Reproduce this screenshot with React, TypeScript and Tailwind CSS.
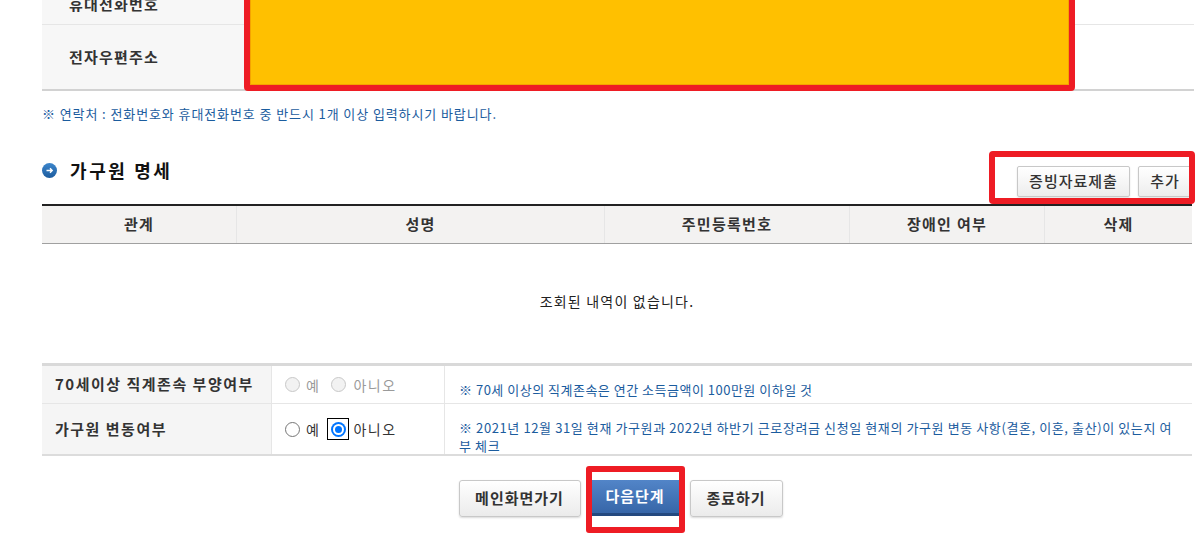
import React from 'react'

const Radio = ({ checked, disabled }: { checked?: boolean; disabled?: boolean }) => {
  if (checked) {
    return (
      <div className="w-[15px] h-[15px] rounded-full bg-[#0075ff] p-[2px]">
        <div className="w-full h-full rounded-full bg-white p-[2px]">
          <div className="w-full h-full rounded-full bg-[#0075ff]" />
        </div>
      </div>
    )
  }
  if (disabled) {
    return <div className="w-[15px] h-[15px] rounded-full border border-[#c8c8c8] bg-[#f2f2f2]" />
  }
  return <div className="w-[15px] h-[15px] rounded-full border border-[#767676] bg-white" />
}

const RadioPair = ({ value, disabled }: { value?: 'yes' | 'no'; disabled?: boolean }) => {
  const txt = disabled ? 'text-[#9a9a9a]' : 'text-[#333]'
  return (
    <div className="flex items-center">
      <Radio checked={value === 'yes'} disabled={disabled} />
      <span className={`ml-[6px] text-[14px] leading-[20px] tracking-[1.5px] ${txt}`}>예</span>
      <div
        className={`ml-[7px] w-[22px] h-[22px] flex items-center justify-center border ${
          value === 'no' ? 'border-black' : 'border-transparent'
        }`}
      >
        <Radio checked={value === 'no'} disabled={disabled} />
      </div>
      <span className={`ml-[4px] text-[14px] leading-[20px] tracking-[1.5px] ${txt}`}>아니오</span>
    </div>
  )
}

const GreyButton = ({ label, className }: { label: string; className?: string }) => (
  <button
    className={`h-[31px] rounded-[2px] border border-[#c8c8c8] bg-gradient-to-b from-white to-[#ededed] shadow-[0_1px_2px_rgba(0,0,0,0.12)] text-[15px] font-medium tracking-[1px] text-[#333] ${className}`}
  >
    {label}
  </button>
)

const columns = [
  { label: '관계', w: 'w-[194px]' },
  { label: '성명', w: 'w-[368px]' },
  { label: '주민등록번호', w: 'w-[245px]' },
  { label: '장애인 여부', w: 'w-[195px]' },
  { label: '삭제', w: 'w-[148px]' },
]

const App = () => {
  return (
    <div className="relative w-[1198px] h-[537px] overflow-hidden bg-white font-['Noto_Sans_CJK_KR','Noto_Sans',sans-serif]">
      <div className="ml-[42px] w-[1152px]">
        {/* contact info table */}
        <div className="-mt-[15px]">
          <div className="flex h-[40px] border-b border-[#e6e6e6]">
            <div className="w-[203px] bg-[#f7f7f7] pl-[27px] flex items-center text-[15px] font-semibold text-[#333] tracking-[1.2px]">
              휴대전화번호
            </div>
            <div className="flex-1" />
          </div>
          <div className="flex h-[66px] border-b-2 border-[#d2d2d2]">
            <div className="w-[203px] bg-[#f7f7f7] pl-[27px] flex items-center text-[15px] font-semibold text-[#333] tracking-[1.2px]">
              전자우편주소
            </div>
            <div className="flex-1" />
          </div>
        </div>

        <p className="mt-[14px] text-[13px] leading-[18px] tracking-[0.9px] text-[#1b5c9e]">
          ※ 연락처 : 전화번호와 휴대전화번호 중 반드시 1개 이상 입력하시기 바랍니다.
        </p>

        {/* section header */}
        <div className="flex justify-between h-[81px] w-[1150px]">
          <div className="mt-[35px] flex items-center gap-[13px] h-[24px]">
            <svg width="15" height="15" viewBox="0 0 15 15">
              <defs>
                <linearGradient id="ic" x1="0" y1="0" x2="0" y2="1">
                  <stop offset="0" stopColor="#3c86cc" />
                  <stop offset="1" stopColor="#1d5c9e" />
                </linearGradient>
              </defs>
              <circle cx="7.5" cy="7.5" r="7.5" fill="url(#ic)" />
              <path d="M4.5 7.5h5.5M8 5.3l2.2 2.2L8 9.7" stroke="#fff" strokeWidth="1.4" fill="none" />
            </svg>
            <span className="text-[18px] leading-[24px] font-semibold tracking-[2.6px] text-[#111]">가구원 명세</span>
          </div>
          <div className="relative mt-[43px] flex gap-[8px] h-[31px]">
            <GreyButton label="증빙자료제출" className="w-[113px]" />
            <GreyButton label="추가" className="w-[54px]" />
            <div className="absolute -left-[28px] -right-[3px] -top-[15px] -bottom-[7px] border-[6px] border-[#ee1c24] rounded-[4px]" />
          </div>
        </div>

        {/* member table */}
        <div className="w-[1150px] border-t-2 border-[#222]">
          <div className="flex h-[38px] bg-[#f3f2f1] border-b border-[#a0a0a0]">
            {columns.map((c, i) => (
              <div
                key={c.label}
                className={`${c.w} flex items-center justify-center text-[15px] font-semibold tracking-[1.3px] text-[#333] ${
                  i > 0 ? 'border-l border-[#e6e6e6]' : ''
                }`}
              >
                {c.label}
              </div>
            ))}
          </div>
          <div className="h-[119px] flex items-center justify-center pb-[4px] text-[14px] tracking-[1.2px] text-[#222]">
            조회된 내역이 없습니다.
          </div>
        </div>

        {/* options table */}
        <div className="w-[1150px] border-t-[3px] border-[#d9d9d9] border-b-2 border-b-[#dcdcdc]">
          <div className="flex h-[38px] border-b border-[#e6e6e6]">
            <div className="w-[229px] bg-[#f5f5f5] pl-[13px] flex items-center text-[15px] font-semibold text-[#333] tracking-[1.5px]">
              70세이상 직계존속 부양여부
            </div>
            <div className="w-[173px] border-l border-[#e6e6e6] pl-[13px] flex items-center">
              <RadioPair disabled />
            </div>
            <div className="flex-1 border-l border-[#e6e6e6] pl-[14px] pt-[15px] text-[13px] leading-[18px] tracking-[0.5px] text-[#1b5c9e]">
              ※ 70세 이상의 직계존속은 연간 소득금액이 100만원 이하일 것
            </div>
          </div>
          <div className="flex h-[50px]">
            <div className="w-[229px] bg-[#f5f5f5] pl-[13px] flex items-center text-[15px] font-semibold text-[#333] tracking-[1.5px]">
              가구원 변동여부
            </div>
            <div className="w-[173px] border-l border-[#e6e6e6] pl-[13px] flex items-center">
              <RadioPair value="no" />
            </div>
            <div className="flex-1 border-l border-[#e6e6e6] pl-[14px] pt-[15px] text-[13px] leading-[18px] tracking-[0.6px] text-[#1b5c9e]">
              <span className="block whitespace-nowrap">
                ※ 2021년 12월 31일 현재 가구원과 2022년 하반기 근로장려금 신청일 현재의 가구원 변동 사항(결혼, 이혼, 출산)이 있는지 여
              </span>
              <span className="block">부 체크</span>
            </div>
          </div>
        </div>

        {/* bottom buttons */}
        <div className="mt-[24px] w-[1150px] pl-[7px] flex justify-center items-start gap-[11px]">
          <button className="w-[122px] h-[37px] rounded-[3px] border border-[#c8c8c8] bg-gradient-to-b from-white to-[#ebebeb] shadow-[0_1px_2px_rgba(0,0,0,0.15)] text-[15px] font-semibold tracking-[1px] text-[#333]">
            메인화면가기
          </button>
          <div className="relative">
            <button className="w-[87px] h-[36px] bg-gradient-to-b from-[#5285c8] to-[#3766a8] border-b-[3px] border-[#24497f] text-[15px] font-semibold tracking-[1px] text-white">
              다음단계
            </button>
            <div className="absolute -left-[6px] -right-[6px] -top-[14px] -bottom-[17px] border-[6px] border-[#ee1c24] rounded-[3px]" />
          </div>
          <button className="w-[93px] h-[37px] rounded-[3px] border border-[#c8c8c8] bg-gradient-to-b from-white to-[#ebebeb] shadow-[0_1px_2px_rgba(0,0,0,0.15)] text-[15px] font-semibold tracking-[1px] text-[#333]">
            종료하기
          </button>
        </div>
      </div>

      {/* redacted email area */}
      <div className="absolute left-[244px] -top-[10px] w-[831px] h-[101px] border-[6px] border-[#ee1c24] rounded-[4px]">
        <div className="w-full h-full bg-[#ffc000] border border-[#f5a300]" />
      </div>
    </div>
  )
}

export default App
